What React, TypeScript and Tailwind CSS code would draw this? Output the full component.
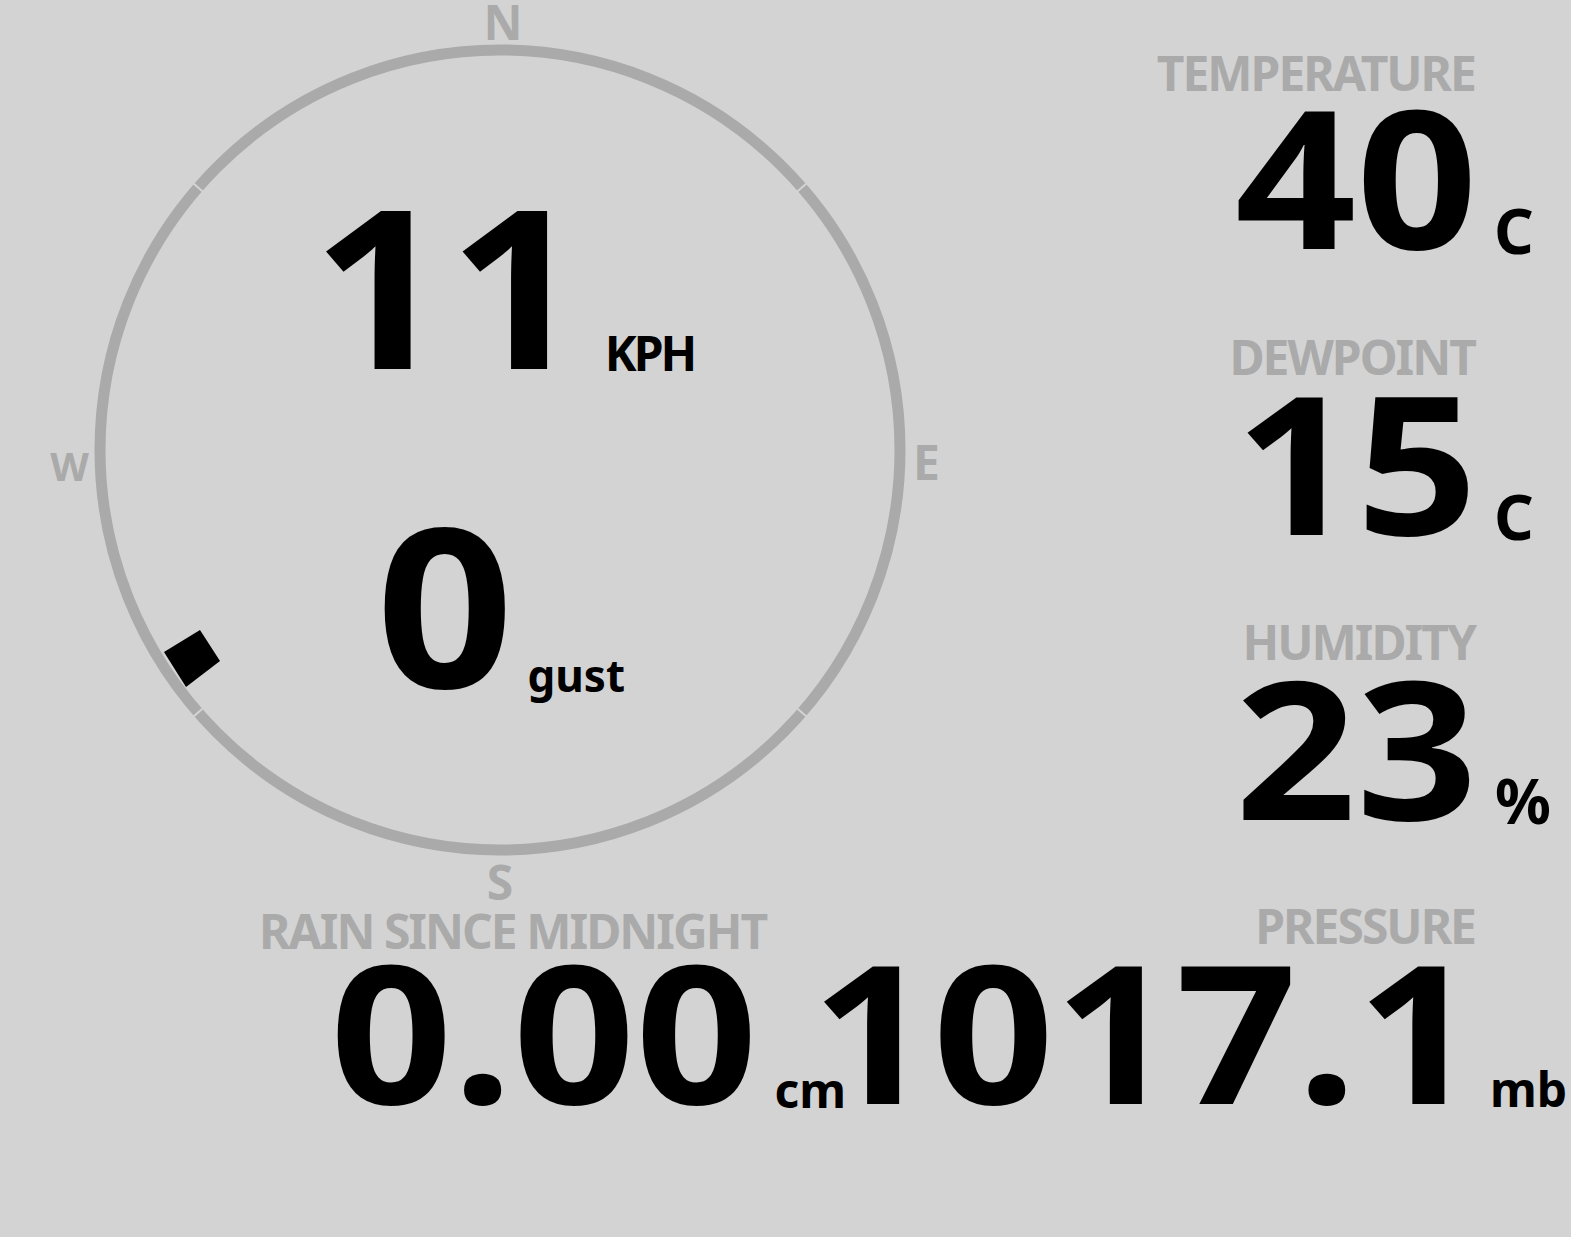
const label = "text-[48px] leading-[40px] tracking-[-2px] text-[#aaa]";
const point = "text-[48px] leading-[40px] text-[#aaa]";

type ReadingProps = {
  label: string;
  value: string;
  unit: string;
  unitClass: string;
  valueGap?: string;
  className?: string;
};

const Reading = ({ label: text, value, unit, unitClass, valueGap = "mt-[8px]", className = "" }: ReadingProps) => (
  <div className={`flex flex-col items-end ${className}`}>
    <div className={`${label} pr-[96px]`}>{text}</div>
    <div className={`${valueGap} flex items-baseline`}>
      <span className="origin-right scale-x-[1.1] text-[193px] leading-[150px]">{value}</span>
      <span className={`leading-[0.8] ${unitClass}`}>{unit}</span>
    </div>
  </div>
);

const Compass = () => {
  // little notches in the ring, just off the diagonals
  const ticks = [221, 319, 139, 41].map((deg) => {
    const a = (deg * Math.PI) / 180;
    return {
      x1: 411 + 392 * Math.cos(a),
      y1: 410 + 392 * Math.sin(a),
      x2: 411 + 408 * Math.cos(a),
      y2: 410 + 408 * Math.sin(a),
    };
  });

  return (
    <div className="flex w-[1000px] shrink-0 flex-col items-center pt-[2px]">
      <div className={`${point} translate-x-[3px]`}>N</div>
      <div className="-mt-[2px] grid grid-cols-[89px_822px_89px]">
        <div className="self-center justify-self-end pt-[30px] text-[40px] leading-[40px] text-[#aaa]">W</div>
        <div className="relative h-[822px] w-[822px]">
          <svg viewBox="0 0 822 822" className="absolute inset-0 h-full w-full">
            <circle cx="411" cy="410" r="400" fill="none" stroke="#aaa" strokeWidth="11" />
            {ticks.map((t, i) => (
              <line key={i} x1={t.x1} y1={t.y1} x2={t.x2} y2={t.y2} stroke="#d3d3d3" strokeWidth="2" />
            ))}
            <polygon points="75,612 111,590 131,621 97,647" fill="#000" />
          </svg>
          <div className="relative flex flex-col pt-[158px]">
            <div className="flex items-baseline pl-[223px]">
              <span className="origin-left scale-x-[1.08] text-[221px] leading-[172px]">11</span>
              <span className="ml-[40px] translate-y-[2px] text-[48px] leading-[0.8] tracking-[-3px]">KPH</span>
            </div>
            <div className="mt-[147px] flex items-baseline pl-[287px]">
              <span className="origin-left scale-x-[1.09] text-[221px] leading-[172px]">0</span>
              <span className="ml-[25px] translate-y-[4px] text-[44px] leading-[0.8]">gust</span>
            </div>
          </div>
        </div>
        <div className="self-center pl-[2px] pt-[22px] text-[48px] leading-[40px] text-[#aaa]">E</div>
      </div>
      <div className={point}>S</div>
    </div>
  );
};

export default function App() {
  return (
    <div className="h-[1237px] w-[1571px] overflow-hidden bg-[#d3d3d3] font-['Noto_Sans','Open_Sans',sans-serif] font-bold text-black">
      <div className="flex">
        <Compass />
        <div className="flex flex-1 flex-col items-end pt-[53px]">
          <Reading
            label="TEMPERATURE"
            value="40"
            unit="C"
            unitClass="ml-[16px] w-[77px] text-[62px] translate-y-[5px]"
            valueGap="mt-[7px]"
          />
          <Reading
            label="DEWPOINT"
            value="15"
            unit="C"
            unitClass="ml-[16px] w-[77px] text-[62px] translate-y-[5px]"
            valueGap="mt-[9px]"
            className="mt-[86px]"
          />
          <Reading
            label="HUMIDITY"
            value="23"
            unit="%"
            unitClass="ml-[17px] w-[76px] text-[62px] translate-y-[4px]"
            valueGap="mt-[9px]"
            className="mt-[86px]"
          />
        </div>
      </div>
      <div className="flex justify-between">
        <div className="flex shrink-0 flex-col pl-[259px] pt-[9px]">
          <div className={label}>RAIN SINCE MIDNIGHT</div>
          <div className="ml-[71px] mt-[4px] flex items-baseline">
            <span className="origin-left scale-x-[1.11] text-[193px] leading-[150px]">0.00</span>
            <span className="ml-[59px] translate-y-[4px] text-[48px] leading-[0.8]">cm</span>
          </div>
        </div>
        <Reading
          label="PRESSURE"
          value="1017.1"
          unit="mb"
          unitClass="ml-[12px] w-[81px] text-[48px] translate-y-[3px]"
          valueGap="mt-[9px]"
          className="shrink-0 pt-[4px]"
        />
      </div>
    </div>
  );
}
